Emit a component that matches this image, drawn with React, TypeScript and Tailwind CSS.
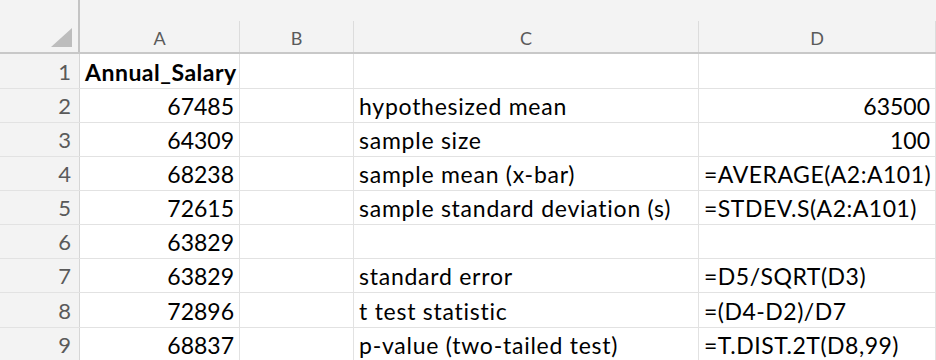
const columns = [
  { key: "A", width: "w-[160px]" },
  { key: "B", width: "w-[114px]" },
  { key: "C", width: "w-[345px]" },
  { key: "D", width: "flex-1" },
];

type Row = {
  n: number;
  h: string;
  a?: string;
  aBold?: boolean;
  c?: string;
  d?: string;
  dRight?: boolean;
};

const rows: Row[] = [
  { n: 1, h: "h-[35px]", a: "Annual_Salary", aBold: true },
  { n: 2, h: "h-[34px]", a: "67485", c: "hypothesized mean", d: "63500", dRight: true },
  { n: 3, h: "h-[34px]", a: "64309", c: "sample size", d: "100", dRight: true },
  { n: 4, h: "h-[34px]", a: "68238", c: "sample mean (x-bar)", d: "=AVERAGE(A2:A101)" },
  { n: 5, h: "h-[34px]", a: "72615", c: "sample standard deviation (s)", d: "=STDEV.S(A2:A101)" },
  { n: 6, h: "h-[34px]", a: "63829" },
  { n: 7, h: "h-[34px]", a: "63829", c: "standard error", d: "=D5/SQRT(D3)" },
  { n: 8, h: "h-[35px]", a: "72896", c: "t test statistic", d: "=(D4-D2)/D7" },
  { n: 9, h: "h-[34px]", a: "68837", c: "p-value (two-tailed test)", d: "=T.DIST.2T(D8,99)" },
];

function Cell({
  width,
  text,
  right,
  bold,
  tracking = "",
}: {
  width: string;
  text?: string;
  right?: boolean;
  bold?: boolean;
  tracking?: string;
}) {
  return (
    <div
      className={`${width} h-full flex items-end pb-[3px] px-[5px] border-r border-[#e2e2e2] whitespace-nowrap overflow-hidden ${
        right ? "justify-end" : "justify-start"
      } ${bold ? "font-bold" : ""} ${tracking}`}
    >
      <span className="leading-[26px]">{text}</span>
    </div>
  );
}

export default function App() {
  return (
    <div className="w-[936px] h-[360px] overflow-hidden bg-white text-black text-[23px] font-['Lato',sans-serif]">
      {/* column headers */}
      <div className="flex h-[54px] bg-[#f3f3f3] border-b-2 border-[#c8c8c8]">
        <div className="w-[80px] h-full flex items-end justify-end pr-[6px] pb-[5px] border-r-2 border-[#c4c4c4]">
          <svg width="21" height="19" viewBox="0 0 21 19">
            <polygon points="21,0 21,19 0,19" fill="#bdbdbd" />
          </svg>
        </div>
        {columns.map((col) => (
          <div key={col.key} className={`${col.width} h-full flex flex-col`}>
            <div className="h-[21px]" />
            <div className="flex-1 flex justify-center pt-[6px] text-[18px] leading-[22px] text-[#5a5a5a] border-r border-[#dcdcdc]">
              {col.key}
            </div>
          </div>
        ))}
      </div>

      {/* rows */}
      {rows.map((r) => (
        <div key={r.n} className={`flex ${r.h} border-b border-[#e2e2e2]`}>
          <div className="w-[80px] h-full flex items-end justify-end pb-[3px] pr-[8px] bg-[#f3f3f3] border-r border-[#d6d6d6] text-[#5a5a5a] text-[22px]">
            <span className="leading-[26px]">{r.n}</span>
          </div>
          <Cell
            width="w-[160px]"
            text={r.a}
            right={!r.aBold}
            bold={r.aBold}
            tracking={r.aBold ? "tracking-[0.5px]" : ""}
          />
          <Cell width="w-[114px]" />
          <Cell width="w-[345px]" text={r.c} tracking="tracking-[0.75px]" />
          <Cell
            width="flex-1"
            text={r.d}
            right={r.dRight}
            tracking={r.dRight ? "" : "tracking-[0.5px]"}
          />
        </div>
      ))}
    </div>
  );
}
